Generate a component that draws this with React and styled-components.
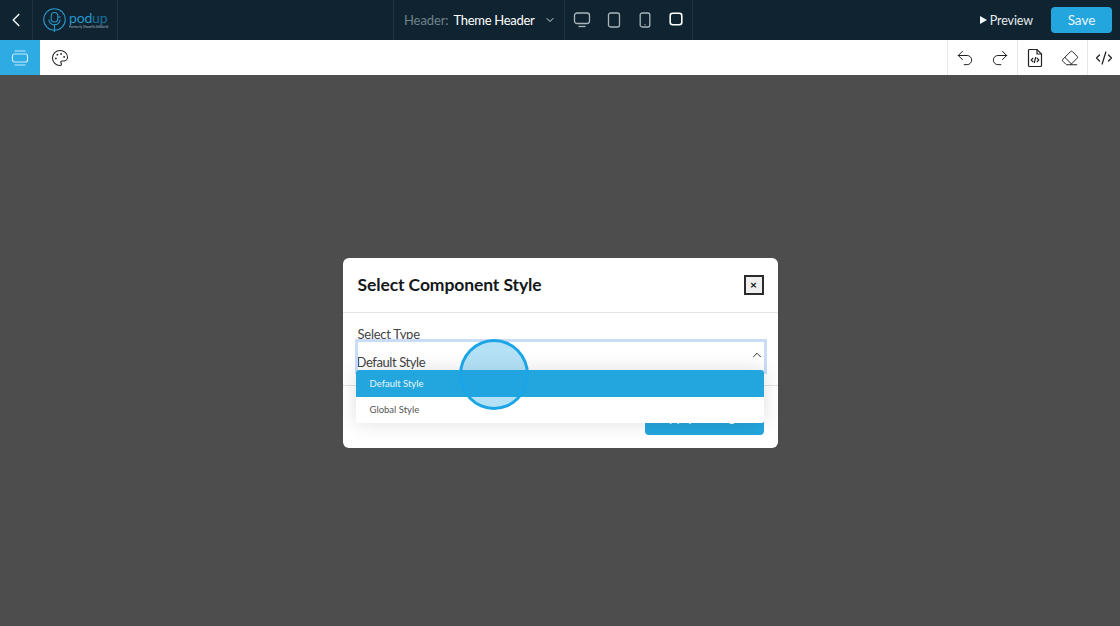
import React from 'react'
import styled, { createGlobalStyle } from 'styled-components'
import { ChevronLeft, ChevronDown, ChevronUp, Palette, Undo2, Redo2, Eraser, CodeXml } from 'lucide-react'

const GlobalStyle = createGlobalStyle`
  * { box-sizing: border-box; }
  html, body { margin: 0; height: 100%; }
  body { font-family: Lato, "Liberation Sans", sans-serif; overflow: hidden; }
`
const Page = styled.div`
  width: 1120px;
  height: 626px;
  display: flex;
  flex-direction: column;
`
const TopBar = styled.header`
  height: 40px;
  flex: none;
  background: #0f2430;
  display: grid;
  grid-template-columns: 393px 300px 1fr;
`
const LeftGroup = styled.div`
  display: flex;
`
const BackButton = styled.div`
  width: 33px;
  display: flex;
  align-items: center;
  justify-content: center;
  color: #e8edf0;
  border-right: 1px solid #1c3340;
`
const LogoCell = styled.div`
  width: 85px;
  display: flex;
  align-items: center;
  gap: 3px;
  padding-left: 10px;
  border-right: 1px solid #1c3340;
`
const LogoWords = styled.div`
  display: flex;
  flex-direction: column;
  align-items: flex-start;
  margin-top: 1px;
`
const LogoName = styled.div`
  font-size: 14px;
  line-height: 14px;
  letter-spacing: -0.2px;
  color: #2796cb;
  span { color: #1b6f9c; }
`
const LogoTag = styled.div`
  font-size: 3.4px;
  line-height: 5px;
  color: #9fb4c0;
  white-space: nowrap;
`
const CenterGroup = styled.div`
  display: flex;
`
const HeaderPicker = styled.div`
  width: 172px;
  display: flex;
  align-items: center;
  padding-left: 10px;
  font-size: 13px;
  letter-spacing: -0.3px;
  white-space: nowrap;
  color: #fff;
  border-left: 1px solid #1c3340;
  border-right: 1px solid #1c3340;
  svg { margin-left: 10px; color: #d5dcdf; }
`
const PickerLabel = styled.span`
  color: #71818b;
  letter-spacing: -0.1px;
  margin-right: 5px;
`
const Devices = styled.div`
  width: 128px;
  display: flex;
  align-items: center;
  border-right: 1px solid #1c3340;
`
const DeviceCell = styled.div`
  width: ${p => p.$w}px;
  height: 40px;
  display: flex;
  align-items: center;
  justify-content: center;
  color: ${p => (p.$active ? '#ffffff' : '#a9b5bb')};
  padding-bottom: ${p => (p.$active ? '3px' : '0')};
`
const RightGroup = styled.div`
  display: flex;
  align-items: center;
  justify-content: flex-end;
  padding-right: 8px;
`
const PreviewLink = styled.div`
  display: flex;
  align-items: center;
  gap: 3px;
  font-size: 12.5px;
  letter-spacing: -0.1px;
  color: #e6ebee;
  margin-right: 18px;
`
const PlayMark = styled.span`
  width: 0;
  height: 0;
  border-left: 7px solid #f2f5f6;
  border-top: 4px solid transparent;
  border-bottom: 4px solid transparent;
`
const SaveButton = styled.div`
  width: 61px;
  height: 26px;
  border-radius: 4px;
  background: #23a6de;
  color: #eaf7fd;
  font-size: 13.5px;
  display: flex;
  align-items: center;
  justify-content: center;
`
const ToolBar = styled.div`
  height: 35px;
  flex: none;
  background: #fff;
  display: flex;
`
const SectionTab = styled.div`
  width: 40px;
  background: #2fabe3;
  color: #c4ecfd;
  display: flex;
  align-items: center;
  justify-content: center;
`
const ToolIcon = styled.div`
  width: ${p => p.$w || 35}px;
  display: flex;
  align-items: center;
  justify-content: center;
  color: #222;
  border-left: ${p => (p.$divided ? '1px solid #e4e8ea' : 'none')};
`
const Spacer = styled.div`
  flex: 1;
`
const Canvas = styled.main`
  flex: 1;
  background: #4d4d4d;
  display: flex;
  justify-content: center;
  padding-top: 183px;
  position: relative;
`
const Modal = styled.section`
  width: 435px;
  height: 190px;
  background: #fff;
  border-radius: 6px;
  display: flex;
  flex-direction: column;
  position: relative;
`
const ModalHead = styled.div`
  height: 55px;
  flex: none;
  padding: 0 14px 0 15px;
  display: flex;
  align-items: center;
  justify-content: space-between;
  border-bottom: 1px solid #e3e3e3;
`
const ModalTitle = styled.h2`
  margin: 0 0 1px;
  font-size: 17.5px;
  font-weight: 700;
  letter-spacing: -0.1px;
  color: #14181b;
`
const CloseBox = styled.div`
  width: 20px;
  height: 20px;
  background: #efefef;
  border: 2px solid #2b2b2b;
  display: flex;
  align-items: center;
  justify-content: center;
  font-size: 12px;
  font-weight: 700;
  line-height: 1;
  color: #111;
`
const ModalBody = styled.div`
  height: 73px;
  flex: none;
  padding: 14px 13px 0 14px;
  border-bottom: 1px solid #e3e3e3;
`
const FieldLabel = styled.div`
  font-size: 13px;
  line-height: 14px;
  letter-spacing: -0.25px;
  padding-left: 1px;
  color: #444;
`
const SelectBox = styled.div`
  height: 31px;
  outline: 3px solid #c9dcf8;
  outline-offset: -1px;
  display: flex;
  align-items: flex-end;
  justify-content: space-between;
  font-size: 13px;
  letter-spacing: -0.4px;
  line-height: 20px;
  color: #444;
  padding-right: 1px;
  svg { margin-bottom: 10px; color: #222; }
`
const ModalFoot = styled.div`
  flex: 1;
  display: flex;
  justify-content: flex-end;
  align-items: flex-end;
  padding: 0 14px 13px;
`
const ApplyButton = styled.div`
  width: 119px;
  height: 37px;
  background: #23a6de;
  border-radius: 4px;
  color: #fff;
  font-size: 13.5px;
  display: flex;
  align-items: center;
  justify-content: center;
`
const Menu = styled.ul`
  position: absolute;
  left: 13px;
  top: 112px;
  width: 408px;
  margin: 0;
  padding: 0;
  list-style: none;
  background: #fff;
  border-radius: 3px;
  overflow: hidden;
  box-shadow: 0 0 20px rgba(0, 0, 0, 0.13);
`
const MenuItem = styled.li`
  height: 26.5px;
  display: flex;
  align-items: center;
  padding: ${p => (p.$selected ? '0 0 0 14px' : '0 0 1px 14px')};
  font-size: 9.5px;
  color: ${p => (p.$selected ? '#e8f7fd' : '#555')};
  background: ${p => (p.$selected ? '#23a6de' : '#fff')};
`
const ClickMarker = styled.div`
  position: absolute;
  left: 116px;
  top: 81px;
  width: 70px;
  height: 71px;
  border-radius: 50%;
  border: 3px solid #1aa5e6;
  background: rgba(30, 165, 230, 0.33);
`

const SectionIcon = () => (
  <svg width="18" height="18" viewBox="0 0 18 18" fill="none" stroke="currentColor" strokeWidth="1.2">
    <rect x="1.5" y="5" width="15" height="8" rx="2" />
    <path d="M3.5 2h11M3.5 16h11" />
  </svg>
)
const FileCodeIcon = () => (
  <svg width="18" height="20" viewBox="0 0 18 20" fill="none" stroke="currentColor" strokeWidth="1.2">
    <path d="M11 1.5H3.5A1 1 0 0 0 2.5 2.5v15a1 1 0 0 0 1 1h11a1 1 0 0 0 1-1V6z" />
    <path d="M11 1.5V6h4.5" />
    <path d="M7.2 9.8 5.2 12l2 2.2M10.8 9.8l2 2.2-2 2.2M9.8 9l-1.6 6" />
  </svg>
)
const DesktopIcon = () => (
  <svg width="18" height="16" viewBox="0 0 18 16" fill="none" stroke="currentColor" strokeWidth="1.3">
    <rect x="1.5" y="1" width="15" height="10.5" rx="2.5" />
    <path d="M5.5 14.5h7" />
  </svg>
)
const TabletIcon = () => (
  <svg width="14" height="16" viewBox="0 0 14 16" fill="none" stroke="currentColor" strokeWidth="1.3">
    <rect x="1.5" y="1" width="11" height="14" rx="2" />
  </svg>
)
const PhoneIcon = () => (
  <svg width="12" height="16" viewBox="0 0 12 16" fill="none" stroke="currentColor" strokeWidth="1.3">
    <rect x="1.2" y="1" width="9.6" height="14" rx="2" />
    <path d="M5.5 12.6h1" />
  </svg>
)
const SquareIcon = () => (
  <svg width="14" height="14" viewBox="0 0 14 14" fill="none" stroke="currentColor" strokeWidth="1.6">
    <rect x="1.2" y="1.2" width="11.6" height="11.6" rx="2.5" />
  </svg>
)
const LogoMark = () => (
  <svg width="23" height="25" viewBox="0 0 23 25" fill="none" stroke="#2796cb" strokeWidth="1.1">
    <circle cx="11.5" cy="11.5" r="10.8" />
    <rect x="8.2" y="4.5" width="6.6" height="9.5" rx="3.3" />
    <path d="M5.8 11.5a5.7 5.7 0 0 0 5.7 5.4 5.7 5.7 0 0 0 5.7-5.4M11.5 17v7M14.8 9h3" />
  </svg>
)

export default function App() {
  return (
    <Page>
      <GlobalStyle />
      <TopBar>
        <LeftGroup>
          <BackButton><ChevronLeft size={22} strokeWidth={1.8} /></BackButton>
          <LogoCell>
            <LogoMark />
            <LogoWords>
              <LogoName>pod<span>up</span></LogoName>
              <LogoTag>Formerly ShowHelloWorld</LogoTag>
            </LogoWords>
          </LogoCell>
        </LeftGroup>
        <CenterGroup>
          <HeaderPicker>
            <PickerLabel>Header:</PickerLabel>
            Theme Header
            <ChevronDown size={12} strokeWidth={2} />
          </HeaderPicker>
          <Devices>
            <DeviceCell $w={34}><DesktopIcon /></DeviceCell>
            <DeviceCell $w={32}><TabletIcon /></DeviceCell>
            <DeviceCell $w={31}><PhoneIcon /></DeviceCell>
            <DeviceCell $w={32} $active><SquareIcon /></DeviceCell>
          </Devices>
        </CenterGroup>
        <RightGroup>
          <PreviewLink><PlayMark />Preview</PreviewLink>
          <SaveButton>Save</SaveButton>
        </RightGroup>
      </TopBar>
      <ToolBar>
        <SectionTab><SectionIcon /></SectionTab>
        <ToolIcon $w={40}><Palette size={18} strokeWidth={1.4} /></ToolIcon>
        <Spacer />
        <ToolIcon $divided><Undo2 size={20} strokeWidth={1.2} /></ToolIcon>
        <ToolIcon><Redo2 size={20} strokeWidth={1.2} /></ToolIcon>
        <ToolIcon $divided><FileCodeIcon /></ToolIcon>
        <ToolIcon><Eraser size={18} strokeWidth={1.3} /></ToolIcon>
        <ToolIcon $divided $w={33}><CodeXml size={18} strokeWidth={1.7} /></ToolIcon>
      </ToolBar>
      <Canvas>
        <Modal>
          <ModalHead>
            <ModalTitle>Select Component Style</ModalTitle>
            <CloseBox>×</CloseBox>
          </ModalHead>
          <ModalBody>
            <FieldLabel>Select Type</FieldLabel>
            <SelectBox>
              Default Style
              <ChevronUp size={14} strokeWidth={1.6} />
            </SelectBox>
          </ModalBody>
          <ModalFoot>
            <ApplyButton>Apply Changes</ApplyButton>
          </ModalFoot>
          <Menu>
            <MenuItem $selected>Default Style</MenuItem>
            <MenuItem>Global Style</MenuItem>
          </Menu>
          <ClickMarker />
        </Modal>
      </Canvas>
    </Page>
  )
}
